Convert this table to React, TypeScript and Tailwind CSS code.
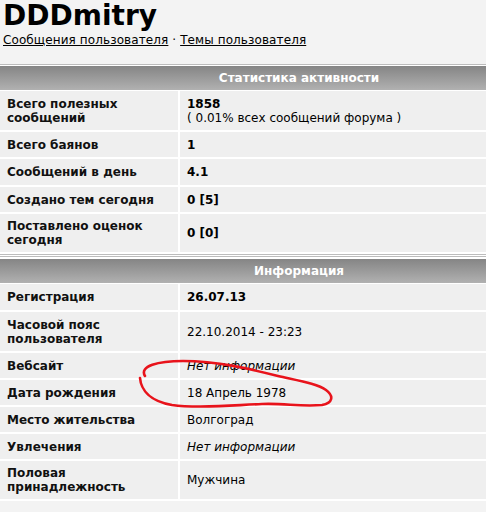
import React from "react";

type Row = { label: string[]; value: React.ReactNode; tall?: boolean; h?: string };

const stats: Row[] = [
  {
    label: ["Всего полезных", "сообщений"],
    tall: true,
    value: (
      <div>
        <div className="font-bold">1858</div>
        <div>( 0.01% всех сообщений форума )</div>
      </div>
    ),
  },
  { label: ["Всего баянов"], value: <span className="font-bold">1</span> },
  { label: ["Сообщений в день"], value: <span className="font-bold">4.1</span>, h: "h-[26px]" },
  { label: ["Создано тем сегодня"], value: <span className="font-bold">0 [5]</span> },
  { label: ["Поставлено оценок", "сегодня"], tall: true, h: "h-[38px]", value: <span className="font-bold">0 [0]</span> },
];

const info: Row[] = [
  { label: ["Регистрация"], value: <span className="font-bold">26.07.13</span>, h: "h-[26px]" },
  { label: ["Часовой пояс", "пользователя"], tall: true, value: <span>22.10.2014 - 23:23</span> },
  { label: ["Вебсайт"], value: <span className="italic">Нет информации</span> },
  { label: ["Дата рождения"], value: <span>18 Апрель 1978</span> },
  { label: ["Место жительства"], value: <span>Волгоград</span> },
  { label: ["Увлечения"], value: <span className="italic">Нет информации</span> },
  { label: ["Половая", "принадлежность"], tall: true, h: "h-[38px]", value: <span>Мужчина</span> },
];

function Table({ title, rows, top }: { title: string; rows: Row[]; top: string }) {
  return (
    <div className={`border-t border-[#bcbcbc] bg-white pb-[2px] ${top}`}>
      <div className="h-[24px] bg-gradient-to-b from-[#858585] to-[#b1b1b1] flex items-center justify-center text-white font-bold text-[12px]">
        {title}
      </div>
      <div className="grid grid-cols-[178px_1fr] gap-x-[2px] gap-y-[2px] mt-[1px]">
        {rows.map((r, i) => {
          const h = r.h ?? (r.tall ? "h-[39px]" : "h-[25px]");
          return (
            <React.Fragment key={i}>
              <div
                className={`bg-[#efefef] pl-[7px] flex items-center font-bold text-[12px] leading-[14px] text-[#111] ${h}`}
              >
                <div>
                  {r.label.map((l, j) => (
                    <div key={j}>{l}</div>
                  ))}
                </div>
              </div>
              <div className={`bg-[#efefef] pl-[7px] flex items-center text-[12px] leading-[14px] text-black ${h}`}>
                {r.value}
              </div>
            </React.Fragment>
          );
        })}
      </div>
    </div>
  );
}

export default function App() {
  return (
    <div
      className="relative w-[486px] h-[512px] overflow-hidden bg-[#f3f3f3]"
      style={{ fontFamily: '"DejaVu Sans", Verdana, sans-serif' }}
    >
      <div className="w-[598px]">
        <div className="pl-[3px] pt-[1px]">
          <div className="text-[28px] leading-[30px] font-bold text-black">DDDmitry</div>
          <div className="text-[12px] leading-[16px] text-black mt-[1px] tracking-[0.1px]">
            <span className="underline">Сообщения пользователя</span>
            <span> · </span>
            <span className="underline">Темы пользователя</span>
          </div>
        </div>
        <div className="mt-[16px]">
          <Table title="Статистика активности" rows={stats} top="pt-[1px]" />
        </div>
        <div className="h-[1px] bg-[#bcbcbc]" />
        <div className="h-[1px] bg-white" />
        <Table title="Информация" rows={info} top="pt-[2px]" />
      </div>
      <svg className="absolute left-0 top-0 pointer-events-none" width="486" height="512" viewBox="0 0 486 512">
        <path
          d="M 145 376 C 139 366, 158 361, 183 361 C 218 361, 250 369, 278 376 C 300 381, 318 384, 326 390 C 334 396, 333 403, 322 405 C 300 407, 285 403, 262 404 C 235 405, 200 409, 172 405 C 150 401, 141 390, 140 378"
          fill="none"
          stroke="#e8131b"
          strokeWidth="2.6"
          strokeLinecap="round"
          strokeLinejoin="round"
        />
      </svg>
    </div>
  );
}
